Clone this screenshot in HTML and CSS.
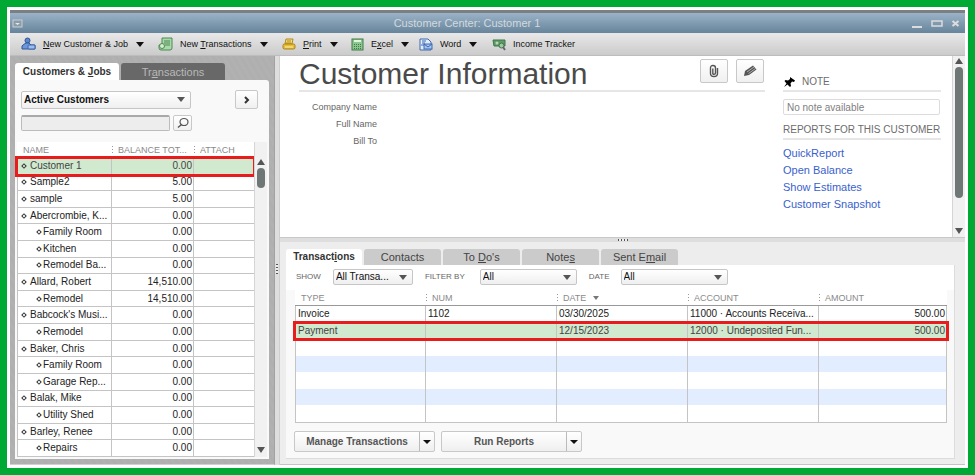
FILE: index.html
```html
<!DOCTYPE html>
<html lang="en">
<head>
  <meta charset="UTF-8">
  <meta name="viewport" content="width=device-width, initial-scale=1.0">
  <title>Customer Center: Customer 1</title>
  <link rel="stylesheet" href="styles.css">
</head>
<body>
<div class="window">

  <header class="titlebar">
    <button class="win-btn" aria-label="Window menu">
      <svg width="11" height="9" viewBox="0 0 11 9"><rect x="1" y="1" width="9" height="7" fill="#8a9dab" stroke="#c9ced2"/><path d="M3 4h5L5.500 6z" fill="#e4e6e8"/></svg>
    </button>
    <h1>Customer Center: Customer 1</h1>
    <div class="win-controls">
      <button class="win-btn" aria-label="Minimize"><svg width="12" height="9" viewBox="0 0 12 9"><path d="M1 8h10" stroke="#dcdcdc" stroke-width="2"/></svg></button>
      <button class="win-btn" aria-label="Maximize"><svg width="12" height="9" viewBox="0 0 12 9"><rect x="1" y="2" width="10" height="5" fill="none" stroke="#dcdcdc" stroke-width="1.500"/></svg></button>
      <button class="win-btn" aria-label="Close"><svg width="9" height="9" viewBox="0 0 9 9"><path d="M1.500 2l6 5M7.500 2l-6 5" stroke="#dcdcdc" stroke-width="2.200"/></svg></button>
    </div>
  </header>

  <nav class="toolbar">
    <button class="tool tool-customer">
      <svg width="15" height="14" viewBox="0 0 15 14"><circle cx="6.500" cy="3.500" r="2.500" fill="#5a86cf" stroke="#2f5596"/><path d="M1 12V9q2-2 4-3h3l2 2h4v4z" fill="#6d97dd" stroke="#2f5596"/><rect x="7" y="8" width="7" height="4" rx="1" fill="#9dbdf0" stroke="#3b66ad"/></svg>
      <span><u>N</u>ew Customer &amp; Job</span><i class="arrow"></i>
    </button>
    <button class="tool tool-transactions">
      <svg width="15" height="14" viewBox="0 0 15 14"><path d="M4 1h10v10q0 2-2 2H3q-2 0-2-2V8h3z" fill="#a9d8a9" stroke="#4d8a55"/><path d="M6 4h6M6 6h6M7 8h5" stroke="#4d8a55"/><circle cx="4" cy="9" r="2.500" fill="#d2efcf" stroke="#4d8a55"/></svg>
      <span>New <u>T</u>ransactions</span><i class="arrow"></i>
    </button>
    <button class="tool tool-print">
      <svg width="14" height="13" viewBox="0 0 14 13"><path d="M4 1h7l-1 5H3z" fill="#f4dc7a" stroke="#b08a1c"/><path d="M5 3h4M4 5h5" stroke="#b08a1c"/><rect x="1" y="6" width="12" height="5" rx="1.500" fill="#e6bd35" stroke="#a9821a"/><path d="M3 9h8" stroke="#fff0a8"/></svg>
      <span><u>P</u>rint</span><i class="arrow"></i>
    </button>
    <button class="tool tool-excel">
      <svg width="13" height="13" viewBox="0 0 13 13"><rect x="1" y="1" width="11" height="11" fill="#8cc58f" stroke="#3f7d48"/><path d="M3 3h7" stroke="#e2f5df" stroke-width="2"/><path d="M3 6.500h7M3 8.500h7M3 10.500h7" stroke="#3f7d48" stroke-dasharray="1 1"/></svg>
      <span>E<u>x</u>cel</span><i class="arrow"></i>
    </button>
    <button class="tool tool-word">
      <svg width="14" height="13" viewBox="0 0 14 13"><path d="M1 1h8l3 3v8H1z" fill="#e3ecfa" stroke="#3d68b0"/><path d="M3 3h4M3 5h3M2 7h3" stroke="#3d68b0"/><rect x="5" y="6" width="8" height="5" fill="#a9c5f2" stroke="#3d68b0"/><path d="M5 6l4 3 4-3" fill="none" stroke="#3d68b0"/></svg>
      <span>Word</span><i class="arrow"></i>
    </button>
    <button class="tool tool-income">
      <svg width="14" height="13" viewBox="0 0 14 13"><path d="M1 2h12v6H2z" fill="#5f9a68" stroke="#3c7648"/><circle cx="5" cy="5" r="1.500" fill="#b5d8b3"/><circle cx="9.500" cy="7.500" r="2.500" fill="#9fc7a1" stroke="#3c7648"/><path d="M11 9l2 3" stroke="#667" stroke-width="2"/></svg>
      <span>Income Tracker</span>
    </button>
  </nav>

  <div class="workspace">

    <aside class="sidebar">
      <div class="side-tabs">
        <button class="side-tab active">Customers &amp; <u>J</u>obs</button>
        <button class="side-tab">Tr<u>a</u>nsactions</button>
      </div>
      <div class="side-panel">
        <div class="side-filter">
          <div class="picker">
            <select class="select bold" aria-label="Customer filter"><option>Active Customers</option></select>
            <i class="arrow"></i>
          </div>
          <button class="next-btn" aria-label="Show full list"><svg width="8" height="10" viewBox="0 0 8 10"><path d="M2 2l3 3-3 3" fill="none" stroke="#333" stroke-width="2"/></svg></button>
        </div>
        <div class="side-search">
          <input type="text" aria-label="Search customers">
          <button class="find-btn" aria-label="Find"><svg width="12" height="12" viewBox="0 0 12 12"><ellipse cx="7" cy="5" rx="4" ry="3.500" fill="none" stroke="#555" stroke-width="1.200"/><path d="M4.500 7.500L1 10.500" stroke="#555" stroke-width="1.500"/></svg></button>
        </div>
        <div class="customer-list">
          <table class="grid customers">
            <colgroup><col class="c-name"><col class="c-balance"><col></colgroup>
            <thead>
              <tr><th>NAME</th><th>BALANCE TOT...</th><th>ATTACH</th></tr>
            </thead>
            <tbody>
              <tr class="selected"><td>Customer 1</td><td>0.00</td><td></td></tr>
              <tr><td>Sample2</td><td>5.00</td><td></td></tr>
              <tr><td>sample</td><td>5.00</td><td></td></tr>
              <tr><td>Abercrombie, K...</td><td>0.00</td><td></td></tr>
              <tr class="job"><td>Family Room</td><td>0.00</td><td></td></tr>
              <tr class="job"><td>Kitchen</td><td>0.00</td><td></td></tr>
              <tr class="job"><td>Remodel Ba...</td><td>0.00</td><td></td></tr>
              <tr><td>Allard, Robert</td><td>14,510.00</td><td></td></tr>
              <tr class="job"><td>Remodel</td><td>14,510.00</td><td></td></tr>
              <tr><td>Babcock's Musi...</td><td>0.00</td><td></td></tr>
              <tr class="job"><td>Remodel</td><td>0.00</td><td></td></tr>
              <tr><td>Baker, Chris</td><td>0.00</td><td></td></tr>
              <tr class="job"><td>Family Room</td><td>0.00</td><td></td></tr>
              <tr class="job"><td>Garage Rep...</td><td>0.00</td><td></td></tr>
              <tr><td>Balak, Mike</td><td>0.00</td><td></td></tr>
              <tr class="job"><td>Utility Shed</td><td>0.00</td><td></td></tr>
              <tr><td>Barley, Renee</td><td>0.00</td><td></td></tr>
              <tr class="job"><td>Repairs</td><td>0.00</td><td></td></tr>
            </tbody>
          </table>
          <div class="scrollbar list-scroll">
            <i class="up"></i><div class="track"><div class="thumb"></div></div><i class="down"></i>
          </div>
        </div>
      </div>
    </aside>

    <div class="splitter-v"><i></i></div>

    <main class="main">
      <section class="info">
        <div class="info-main">
          <div class="info-head">
            <h2>Customer Information</h2>
            <button class="icon-btn" aria-label="Attach"><svg width="12" height="14" viewBox="0 0 12 14"><path d="M9.500 4v5.500q0 3-3.500 3t-3.500-3V4q0-2.500 2.500-2.500T7.500 4v5q0 1.200-1.500 1.200T4.800 9V4.500" fill="none" stroke="#555" stroke-width="1.400"/></svg></button>
            <button class="icon-btn" aria-label="Edit"><svg width="14" height="12" viewBox="0 0 14 12"><path d="M1 11l1-5 8-5.500 3.500 4L6 10z" fill="#555"/><path d="M4 7l7-5M5.500 8.500l7-5" stroke="#d8d8d8" stroke-width=".7"/></svg></button>
          </div>
          <dl class="fields">
            <dt>Company Name</dt><dd></dd>
            <dt>Full Name</dt><dd></dd>
            <dt>Bill To</dt><dd></dd>
          </dl>
        </div>
        <div class="info-side">
          <h3 class="note-title"><svg width="13" height="12" viewBox="0 0 13 12"><path d="M7 1l5 3.500-1 1.500-2-.5L7.500 7.500 8 10l-1 1-2.500-2.500L1 11l2.500-3.500L1.500 5l1-1L5 4.500l2-1.500z" fill="#000"/></svg><label for="note">NOTE</label></h3>
          <input class="note" id="note" type="text" value="No note available" readonly>
          <h3>REPORTS FOR THIS CUSTOMER</h3>
          <ul class="links">
            <li><a href="#">QuickReport</a></li>
            <li><a href="#">Open Balance</a></li>
            <li><a href="#">Show Estimates</a></li>
            <li><a href="#">Customer Snapshot</a></li>
          </ul>
        </div>
        <div class="scrollbar info-scroll">
          <i class="up"></i><div class="track"><div class="thumb"></div></div><i class="down"></i>
        </div>
      </section>

      <div class="splitter-h"><i></i></div>

      <section class="detail">
        <div class="tabs">
          <button class="tab active">Transact<u>i</u>ons</button>
          <button class="tab">Contacts</button>
          <button class="tab">To <u>D</u>o's</button>
          <button class="tab">Note<u>s</u></button>
          <button class="tab">Sent E<u>m</u>ail</button>
        </div>
        <div class="detail-panel">
          <div class="filters">
            <label for="show">SHOW</label>
            <div class="picker w-show"><select class="select" id="show"><option>All Transa...</option></select><i class="arrow"></i></div>
            <label for="filter">FILTER BY</label>
            <div class="picker w-filter"><select class="select" id="filter"><option>All</option></select><i class="arrow"></i></div>
            <label for="date">DATE</label>
            <div class="picker w-date"><select class="select" id="date"><option>All</option></select><i class="arrow"></i></div>
          </div>
          <div class="table-wrap">
            <table class="grid transactions">
              <colgroup><col class="c-data" span="4"><col></colgroup>
              <thead>
                <tr><th>TYPE</th><th>NUM</th><th>DATE <i class="arrow"></i></th><th>ACCOUNT</th><th>AMOUNT</th></tr>
              </thead>
              <tbody>
                <tr><td>Invoice</td><td>1102</td><td>03/30/2025</td><td>11000 · Accounts Receiva...</td><td>500.00</td></tr>
                <tr class="selected"><td>Payment</td><td></td><td>12/15/2023</td><td>12000 · Undeposited Fun...</td><td>500.00</td></tr>
                <tr><td>&nbsp;</td><td></td><td></td><td></td><td></td></tr>
                <tr><td>&nbsp;</td><td></td><td></td><td></td><td></td></tr>
                <tr><td>&nbsp;</td><td></td><td></td><td></td><td></td></tr>
                <tr><td>&nbsp;</td><td></td><td></td><td></td><td></td></tr>
                <tr><td>&nbsp;</td><td></td><td></td><td></td><td></td></tr>
              </tbody>
            </table>
          </div>
          <div class="actions">
            <div class="split-btn"><button>Manage Transactions</button><button class="drop" aria-label="Manage Transactions menu"><i class="arrow"></i></button></div>
            <div class="split-btn"><button>Run Reports</button><button class="drop" aria-label="Run Reports menu"><i class="arrow"></i></button></div>
          </div>
        </div>
      </section>
    </main>
  </div>
</div>
</body>
</html>
```
FILE: styles.css
```css
:root {
  --green: #00a933;
  --red: #e81c1c;
  --selected: #d1e9cf;
  --line: #c4c4c4;
  --link: #3a5fcd;
}

*, *::before {
  box-sizing: border-box;
  margin: 0;
  padding: 0;
}

body {
  height: 100vh;
  padding: 7px;
  background: var(--green);
  font-family: "Liberation Sans", Arial, sans-serif;
  font-size: 10px;
  line-height: 12px;
  color: #222;
}

button, input, select {
  font: inherit;
  color: inherit;
}

button {
  border: 0;
  background: none;
  white-space: nowrap;
}

svg {
  display: block;
  flex: none;
}

.window {
  height: 100%;
  display: flex;
  flex-direction: column;
  background: #fff;
  border: 3px solid #fff;
}

/* small black triangle used in menus and drop-downs */
.arrow {
  display: inline-block;
  flex: none;
  width: 0;
  border: 4px solid transparent;
  border-top: 5px solid #111;
  border-bottom: 0;
}

/* title bar */
.titlebar {
  flex: none;
  height: 23px;
  display: flex;
  align-items: center;
  justify-content: space-between;
  padding: 0 5px 0 2px;
  border-top: 3px solid #7c7f82;
  background: linear-gradient(#9bb3c8, #66849a);
}

.titlebar h1 {
  font-size: 11px;
  font-weight: normal;
  color: #d3d9de;
}

.win-controls {
  display: flex;
  gap: 8px;
}

/* toolbar */
.toolbar {
  flex: none;
  height: 23px;
  display: flex;
  align-items: center;
  padding-left: 11px;
  border-bottom: 1px solid #bdbdbd;
  background: linear-gradient(#e8e8e8, #cbcbcb);
}

.tool {
  display: flex;
  align-items: center;
  gap: 7px;
  font-size: 9px;
  color: #111;
}

.tool .arrow {
  border-width: 5px 4px 0;
  margin-left: 1px;
}

.tool-customer { width: 137px; }
.tool-transactions { width: 124px; }
.tool-print { width: 69px; }
.tool-excel { width: 68px; }
.tool-word { width: 73px; }

/* layout under the toolbar */
.workspace {
  flex: 1;
  min-height: 0;
  display: flex;
}

.sidebar {
  flex: 0 0 265px;
  display: flex;
  flex-direction: column;
  padding: 7px 5px 5px;
  background: repeating-linear-gradient(60deg, #afafaf 0 3px, #b1b1b1 3px 6px);
  border-right: 1px solid #a2a2a2;
  border-bottom: 1px solid #d0d0d0;
}

.side-tabs {
  display: flex;
  gap: 2px;
}

.side-tab {
  width: 104px;
  height: 17px;
  border-radius: 3px 3px 0 0;
  background: #686868;
  color: #b8b8b8;
  font-size: 11px;
}

.side-tab.active {
  background: #fff;
  color: #333;
  font-size: 10px;
  font-weight: bold;
}

.side-panel {
  flex: 1;
  min-height: 0;
  display: flex;
  flex-direction: column;
  padding: 10px 2px 2px;
  background: #f9f9f9;
  border-radius: 0 3px 0 0;
}

.side-filter {
  display: flex;
  justify-content: space-between;
  padding: 0 9px 0 4px;
}

.side-filter .picker { width: 170px; }

.picker {
  display: grid;
  align-items: center;
}

.picker > * { grid-area: 1 / 1; }

.picker .arrow {
  justify-self: end;
  margin-right: 6px;
  border-top-color: #555;
  pointer-events: none;
}

.select {
  appearance: none;
  width: 100%;
  height: 16px;
  padding: 0 2px;
  border: 1px solid #c6c6c6;
  border-radius: 2px;
  background: linear-gradient(#fff, #efefef);
  color: #111;
}

.side-filter .select { height: 18px; }
.bold { font-weight: bold; }

.next-btn, .find-btn, .icon-btn {
  display: flex;
  align-items: center;
  justify-content: center;
  border: 1px solid #c8c8c8;
  border-radius: 2px;
  background: linear-gradient(#fff, #f0f0f0);
}

.next-btn { width: 23px; height: 19px; }

.side-search {
  display: flex;
  gap: 3px;
  padding: 6px 4px 11px;
}

.side-search input {
  width: 149px;
  height: 16px;
  border: 1px solid #bcbcbc;
  border-top: 2px solid #a9a9a9;
  border-radius: 2px;
  background: #ededed;
}

.find-btn { width: 19px; height: 16px; }

/* tables */
.grid {
  width: 100%;
  height: 100%;
  table-layout: fixed;
  border-collapse: separate;
  border-spacing: 0;
  background: #fff;
}

.grid th {
  height: 16px;
  font-size: 9px;
  font-weight: normal;
  text-align: left;
  color: #8a8a8a;
  white-space: nowrap;
  background: #fff;
}

/* dotted column grips */
.grid th + th {
  background: repeating-linear-gradient(#999 0 1px, #fff 1px 3px) 0 4px / 1px 8px no-repeat, #fff;
}

.grid td {
  border-right: 1px solid var(--line);
  white-space: nowrap;
  overflow: hidden;
}

.selected td {
  background: var(--selected);
  color: #444;
}

.selected {
  outline: 3px solid var(--red);
  outline-offset: -1px;
}

.customer-list {
  flex: 1;
  min-height: 0;
  display: flex;
}

.customers th { padding-left: 6px; }

.customers td {
  border-bottom: 1px solid var(--line);
}

.customers td:first-child {
  padding-left: 3px;
  border-left: 1px solid var(--line);
}

.customers td:first-child::before {
  content: "";
  display: inline-block;
  width: 4px;
  height: 4px;
  margin: 0 4px 1px 1px;
  border: 1px solid #333;
  transform: rotate(45deg);
}

.customers .job td:first-child { padding-left: 18px; }
.customers .job td:first-child::before { margin-right: 2px; }
.customers td:nth-child(2) { text-align: right; padding-right: 1px; }
.customers td:last-child { border-right: 0; }
.c-name { width: 95px; }
.c-balance { width: 82px; }
.c-data { width: 131px; }

/* scrollbars */
.scrollbar {
  flex: none;
  width: 13px;
  display: flex;
  flex-direction: column;
  align-items: center;
  background: #f1f1f1;
  border-left: 1px solid #d5d5d5;
}

.scrollbar .up, .scrollbar .down {
  width: 0;
  border: 4px solid transparent;
}

.scrollbar .up { border-top: 0; border-bottom: 6px solid #555; }
.scrollbar .down { border-bottom: 0; border-top: 6px solid #555; }

.track {
  flex: 1;
  padding: 3px 0;
}

.thumb {
  width: 8px;
  border-radius: 4px;
  background: #6f7676;
}

.list-scroll { padding: 17px 0 4px; }
.list-scroll .thumb { height: 20px; }
.info-scroll { padding: 2px 0 3px; }
.info-scroll .thumb { height: 131px; }

/* splitters */
.splitter-v {
  flex: 0 0 5px;
  display: flex;
  align-items: center;
  justify-content: center;
  background: #dedede;
  border-right: 1px solid #cfcfcf;
}

.splitter-v i {
  width: 2px;
  height: 10px;
  margin-top: 16px;
  background: repeating-linear-gradient(#555 0 1px, #eee 1px 3px);
}

.splitter-h {
  flex: 0 0 5px;
  display: flex;
  align-items: center;
  justify-content: center;
  background: #dedede;
  border-top: 1px solid #c8c8c8;
}

.splitter-h i {
  width: 10px;
  height: 2px;
  background: repeating-linear-gradient(90deg, #555 0 1px, #eee 1px 3px);
}

.main {
  flex: 1;
  min-width: 0;
  display: flex;
  flex-direction: column;
}

/* customer information */
.info {
  flex: 0 0 181px;
  display: flex;
  background: #fff;
}

.info-main {
  flex: 1;
  padding: 0 18px 0 19px;
}

.info-head {
  display: flex;
  gap: 8px;
  padding: 3px 1px 7px 0;
  border-bottom: 2px solid #e6e6e6;
}

.info-head h2 {
  flex: 1;
  font-size: 30px;
  line-height: 30px;
  margin-bottom: -6px;
  font-weight: normal;
  color: #4a4a4a;
}

.icon-btn { width: 28px; height: 24px; }

.fields {
  display: grid;
  grid-template-columns: 78px 1fr;
  row-gap: 5px;
  padding-top: 9px;
  font-size: 9px;
  color: #666;
}

.fields dt { text-align: right; }

.info-side {
  flex: 0 0 169px;
  padding-top: 20px;
}

.info-side h3 {
  width: 158px;
  padding-bottom: 2px;
  border-bottom: 2px solid #e6e6e6;
  font-size: 10px;
  font-weight: normal;
  white-space: nowrap;
  color: #6c6c6c;
}

.note-title {
  display: flex;
  align-items: center;
  gap: 6px;
}

.note {
  display: block;
  width: 157px;
  height: 16px;
  margin: 7px 0 9px;
  padding: 0 3px;
  border: 1px solid #dcdcdc;
  border-radius: 2px;
  font-size: 10px;
  color: #808080;
}

.links {
  list-style: none;
  padding-top: 7px;
  display: grid;
  row-gap: 5px;
  font-size: 11px;
}

.links a {
  color: var(--link);
  text-decoration: none;
}

/* transactions */
.detail {
  flex: 1;
  min-height: 0;
  display: flex;
  flex-direction: column;
  padding: 7px 10px 5px 6px;
  background: #ededed;
  border-bottom: 1px solid #c4c4c4;
}

.tabs {
  display: flex;
  gap: 2px;
}

.tab {
  width: 77px;
  height: 16px;
  border-radius: 3px 3px 0 0;
  background: #cbcbcb;
  color: #444;
  font-size: 11px;
}

.tab.active {
  width: 76px;
  background: #fff;
  color: #333;
  font-size: 10px;
  font-weight: bold;
}

.detail-panel {
  flex: 1;
  min-height: 0;
  display: flex;
  flex-direction: column;
  background: #f9f9f9;
  border-right: 1px solid #dcdcdc;
  border-bottom: 1px solid #dcdcdc;
}

.filters {
  display: flex;
  align-items: center;
  padding: 4px 10px 5px;
  background: #fff;
  font-size: 10px;
}

.filters label {
  font-size: 8px;
  color: #666;
  white-space: nowrap;
}

.w-show { width: 80px; margin: 0 12px; }
.w-filter { width: 97px; margin: 0 12px 0 15px; }
.w-date { width: 107px; margin-left: 11px; }

.table-wrap {
  flex: 1;
  min-height: 0;
  margin: 0 7px 0 9px;
  border-bottom: 1px solid var(--line);
}

.transactions th {
  padding-left: 6px;
  border-bottom: 1px solid #999;
}

.transactions th .arrow {
  margin-left: 4px;
  vertical-align: middle;
  border-top-color: #777;
  border-width: 4px 3px 0;
}

.transactions td { padding-left: 2px; }
.transactions td:first-child { border-left: 1px solid var(--line); }
.transactions td:last-child { text-align: right; padding-right: 1px; }
.transactions tbody tr:nth-child(even):not(.selected) { background: #e2eeff; }

.actions {
  display: flex;
  gap: 6px;
  padding: 8px 8px 6px;
}

.split-btn {
  width: 141px;
  height: 21px;
  display: flex;
  border: 1px solid #c8c8c8;
  border-radius: 2px;
  background: linear-gradient(#fff, #efefef);
  font-weight: bold;
  color: #555;
}

.split-btn button:first-child { flex: 1; }

.split-btn .drop {
  width: 15px;
  border-left: 1px solid #bbb;
}

.drop .arrow {
  display: block;
  margin: 0 auto;
  border-width: 4px 4px 0;
}
```
